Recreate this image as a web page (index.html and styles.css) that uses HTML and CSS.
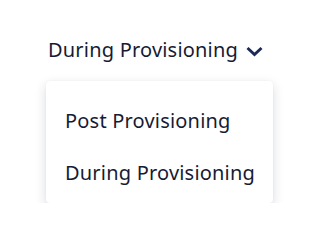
FILE: index.html
```html
<!DOCTYPE html>
<html>
<head>
<meta charset="utf-8">
<link rel="stylesheet" href="styles.css">
</head>
<body>
<div class="dropdown">
  <button class="trigger">
    <span class="label">During Provisioning</span>
    <svg class="chevron" width="17" height="11" viewBox="0 0 17 11"><path d="M1.5 2 L8.5 8.6 L15.5 2" fill="none" stroke="#1c2857" stroke-width="2.9" stroke-linejoin="miter"/></svg>
  </button>
  <ul class="menu">
    <li class="item">Post Provisioning</li>
    <li class="item">During Provisioning</li>
  </ul>
</div>
</body>
</html>
```
FILE: styles.css
```css
html, body {
  margin: 0;
  padding: 0;
  background: #ffffff;
}
body {
  font-family: "Noto Sans", "Open Sans", sans-serif;
  color: #161b33;
}
.dropdown {
  display: flex;
  flex-direction: column;
  align-items: flex-start;
  padding: 35px 0 0 46px;
}
.trigger {
  display: flex;
  align-items: center;
  gap: 8px;
  border: none;
  background: none;
  padding: 0 0 0 2px;
  margin: 0;
  font: inherit;
  color: inherit;
  font-size: 20px;
  letter-spacing: 0.2px;
  line-height: 30px;
  white-space: nowrap;
}
.chevron {
  display: block;
  margin-top: 2px;
}
.menu {
  list-style: none;
  margin: 16px 0 0 0;
  padding: 13px 0 5px;
  width: 227px;
  box-sizing: border-box;
  background: #ffffff;
  border-radius: 4px;
  box-shadow: 0 4px 12px rgba(20, 30, 60, 0.16), 0 0 2px rgba(20, 30, 60, 0.06);
}
.item {
  font-size: 20px;
  letter-spacing: 0.2px;
  padding: 0 19px;
  height: 52px;
  display: flex;
  align-items: center;
  white-space: nowrap;
}
```
